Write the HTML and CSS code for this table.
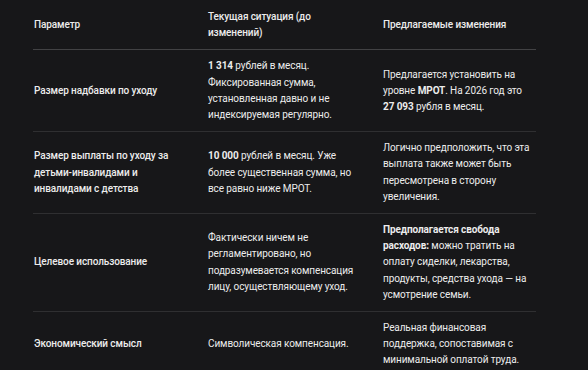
FILE: index.html
```html
<!DOCTYPE html>
<html lang="ru">
<head>
<meta charset="utf-8">
<link rel="stylesheet" href="styles.css">
</head>
<body>
<div class="wrap">
<table class="tbl">
<thead>
<tr><th class="c1">Параметр</th><th class="c2">Текущая ситуация (до изменений)</th><th class="c3">Предлагаемые изменения</th></tr>
</thead>
<tbody>
<tr><td class="c1">Размер надбавки по уходу</td><td class="c2"><b>1&nbsp;314</b> рублей в месяц. Фиксированная сумма, установленная давно и не индексируемая регулярно.</td><td class="c3"><div class="txt">Предлагается установить на уровне <b>МРОТ</b>. На 2026 год это <b>27&nbsp;093</b> рубля в месяц.</div></td></tr>
<tr><td class="c1">Размер выплаты по уходу за детьми-инвалидами и инвалидами с детства</td><td class="c2"><b>10&nbsp;000</b> рублей в месяц. Уже более существенная сумма, но все равно ниже МРОТ.</td><td class="c3"><div class="txt">Логично предположить, что эта выплата также может быть пересмотрена в сторону увеличения.</div></td></tr>
<tr><td class="c1">Целевое использование</td><td class="c2">Фактически ничем не регламентировано, но подразумевается компенсация лицу, осуществляющему уход.</td><td class="c3"><div class="txt"><b>Предполагается свобода расходов:</b> можно тратить на оплату сиделки, лекарства, продукты, средства ухода — на усмотрение семьи.</div></td></tr>
<tr><td class="c1">Экономический смысл</td><td class="c2">Символическая компенсация.</td><td class="c3"><div class="txt">Реальная финансовая поддержка, сопоставимая с минимальной оплатой труда.</div></td></tr>
</tbody>
</table>
</div>
</body>
</html>
```
FILE: styles.css
```css
html, body {
  margin: 0;
  padding: 0;
  background: #171719;
}
body {
  color: #ececec;
  font-family: Roboto, "Noto Sans", sans-serif;
  font-size: 10px;
  letter-spacing: -0.1px;
  line-height: 16.2px;
}
.wrap {
  padding: 1px 53px 0 33px;
}
.tbl {
  width: 502px;
  border-collapse: collapse;
  table-layout: fixed;
}
.tbl th, .tbl td {
  text-align: left;
  vertical-align: middle;
  padding: 8px 8px;
}
.tbl th {
  font-weight: 500;
  border-bottom: 1px solid #424244;
}
.tbl td {
  font-weight: 400;
  border-bottom: 1px solid #2f2f31;
}
.tbl tbody tr:last-child td {
  border-bottom: none;
}
.tbl .c1 {
  width: 158px;
  padding-left: 1px;
  font-weight: 500;
}
.tbl .c2 {
  width: 151px;
  padding-right: 16px;
}
.tbl .c3 {
  width: 153px;
  padding-right: 0;
}
.txt {
  margin-right: -5px;
}
.tbl b {
  font-weight: 700;
}
```
